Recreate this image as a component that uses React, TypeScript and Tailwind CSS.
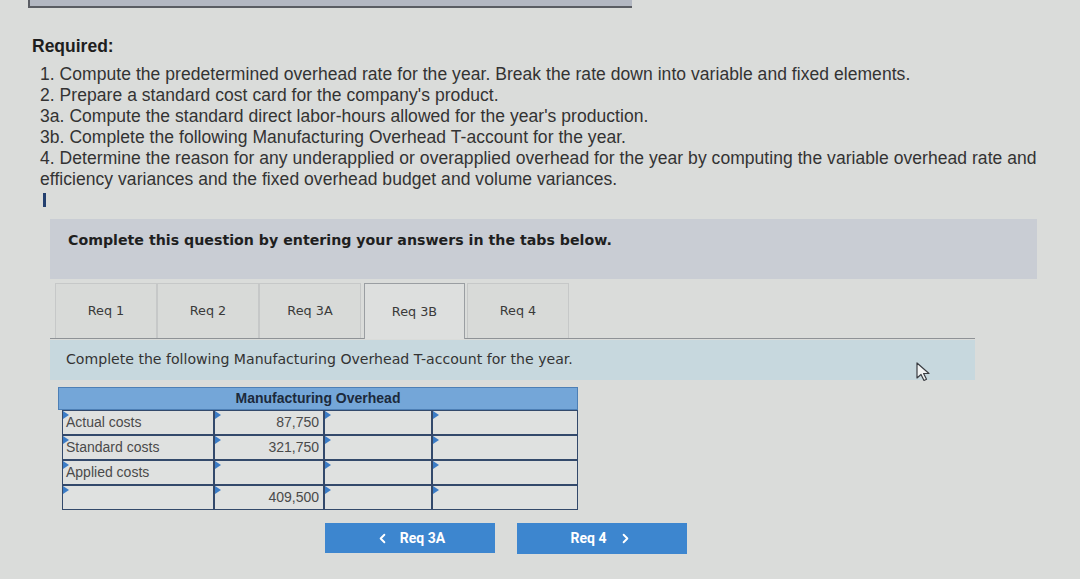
import { ChevronLeft, ChevronRight } from "lucide-react";

const tabs = ["Req 1", "Req 2", "Req 3A", "Req 3B", "Req 4"];

const rows = [
  { label: "Actual costs", amount: "87,750" },
  { label: "Standard costs", amount: "321,750" },
  { label: "Applied costs", amount: "" },
  { label: "", amount: "409,500" },
];

const Flag = () => (
  <span className="absolute left-0 top-0 w-0 h-0 border-t-[4px] border-b-[4px] border-l-[6px] border-t-transparent border-b-transparent border-l-[#3b7cc6]" />
);

const Cell = ({ children, className = "" }: { children?: React.ReactNode; className?: string }) => (
  <div className={`relative h-[25px] border-[1.5px] border-[#33496b] bg-[#dfe1e0] flex items-center ${className}`}>
    <Flag />
    {children}
  </div>
);

const App = () => {
  return (
    <div className="relative w-[1080px] h-[579px] overflow-hidden bg-[#dadcda] font-['Liberation_Sans',Arial,sans-serif] text-[#2e2e2e]">
      {/* top strip cut off */}
      <div className="ml-[28px] w-[604px] h-[8px] bg-[#b3b8c2] border-l-2 border-b-2 border-[#5a5d63]" />

      {/* Required */}
      <div className="pl-[32px] mt-[27px]">
        <div className="text-[17.5px] leading-[22px] font-bold text-[#1e1e1e]">Required:</div>
        <ul className="mt-[7px] pl-[8px] text-[17.5px] leading-[21px] tracking-[0.05px] text-[#333]">
          <li>1. Compute the predetermined overhead rate for the year. Break the rate down into variable and fixed elements.</li>
          <li>2. Prepare a standard cost card for the company's product.</li>
          <li>3a. Compute the standard direct labor-hours allowed for the year's production.</li>
          <li>3b. Complete the following Manufacturing Overhead T-account for the year.</li>
          <li className="w-[1020px]">
            4. Determine the reason for any underapplied or overapplied overhead for the year by computing the variable overhead rate and efficiency variances and the fixed overhead budget and volume variances.
          </li>
        </ul>
        <div className="ml-[11px] mt-[3px] w-[3px] h-[14px] bg-[#23406f]" />
      </div>

      {/* Instruction panel */}
      <div className="ml-[50px] mt-[12px] w-[987px] h-[60px] bg-[#c9cdd4] pl-[18px] pt-[11px] font-['DejaVu_Sans',Verdana,sans-serif] text-[14.2px] font-bold text-[#1f1f1f]">
        Complete this question by entering your answers in the tabs below.
      </div>

      {/* Tabs */}
      <div className="ml-[50px] mt-[4px] w-[925px] border-b border-[#8e9296] flex pl-[5px] font-['DejaVu_Sans',Verdana,sans-serif] text-[12.8px] text-[#3a3a3a]">
        {tabs.map((t) => {
          const active = t === "Req 3B";
          return (
            <div
              key={t}
              className={
                active
                  ? "w-[101px] h-[56px] -mb-px ml-[3px] mr-[2px] border border-b-0 border-[#9a9ea2] bg-[#dddfde] flex items-center justify-center"
                  : "w-[102px] h-[55px] border border-[#c6c8c8] border-b-0 bg-[#d8dad8] flex items-center justify-center"
              }
            >
              {t}
            </div>
          );
        })}
      </div>

      <div className="ml-[50px] mt-px w-[925px] h-[40px] bg-[#c7d8de] pl-[16px] flex items-center font-['DejaVu_Sans',Verdana,sans-serif] text-[14.1px] text-[#333]">
        Complete the following Manufacturing Overhead T-account for the year.
      </div>

      {/* T-account */}
      <div className="ml-[58px] mt-[7px] w-[520px]">
        <div className="h-[23px] bg-[#74a6d8] border border-[#4d7fb5] flex items-center justify-center text-[14px] font-bold text-[#1c2a3c]">
          Manufacturing Overhead
        </div>
        <div className="pl-[4px] grid grid-cols-[152px_110px_108px_146px] text-[14px] text-[#4a4a4a]">
          {rows.map((r, i) => (
            <div key={i} className="contents">
              <Cell className="pl-[3px] border-[#6b6f75] border">{r.label}</Cell>
              <Cell className="justify-end pr-[4px]">{r.amount}</Cell>
              <Cell />
              <Cell />
            </div>
          ))}
        </div>
      </div>

      {/* Nav buttons */}
      <div className="ml-[325px] mt-[13px] flex gap-[22px] font-['Roboto',Arial,sans-serif] text-[14px] font-bold text-white">
        <button className="w-[170px] h-[30px] bg-[#3d86cf] flex items-center justify-center gap-[10px]">
          <ChevronLeft size={15} strokeWidth={3} />
          Req 3A
        </button>
        <button className="w-[170px] h-[31px] bg-[#3d86cf] flex items-center justify-center gap-[12px]">
          Req 4
          <ChevronRight size={15} strokeWidth={3} />
        </button>
      </div>

      {/* mouse pointer */}
      <svg className="absolute left-[916px] top-[362px]" width="16" height="20" viewBox="0 0 16 20">
        <path d="M1 1 L1 16 L5 12.5 L8 18.5 L10.5 17.3 L7.6 11.5 L13 11.5 Z" fill="#f2f4f4" stroke="#3a3d42" strokeWidth="1.2" strokeLinejoin="round" />
      </svg>
    </div>
  );
};

export default App;
